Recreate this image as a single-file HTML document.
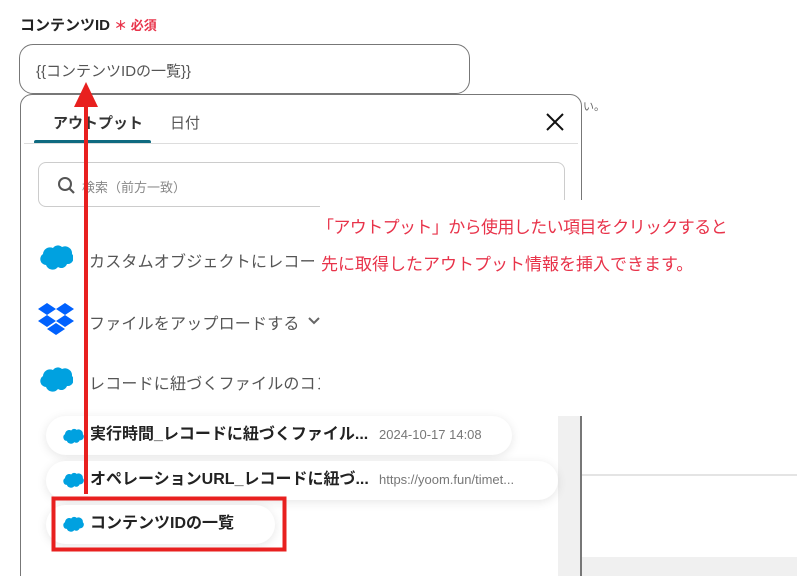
<!DOCTYPE html>
<html><head><meta charset="utf-8"><style>
*{margin:0;padding:0;box-sizing:border-box}
html,body{width:797px;height:576px;overflow:hidden}
body{position:relative;background:#fff;font-family:"Liberation Sans","Noto Sans CJK JP",sans-serif}
.a{position:absolute}
.pill{position:absolute;background:#fff;border-radius:20px;box-shadow:0 2px 10px rgba(0,0,0,0.10);font-weight:bold;font-size:16px;color:#222;line-height:38px;padding-left:44px;white-space:nowrap}
.pill .s{font-weight:normal;font-size:13px;color:#777;position:absolute;left:333px;top:0}
.sf{position:absolute}
.it{position:absolute;left:89px;font-size:16px;color:#555;white-space:nowrap;letter-spacing:0.2px}
</style></head><body>
<div class="a" style="left:20px;top:14px;font-size:15px;font-weight:bold;color:#222">コンテンツID <span style="color:#e8334a;font-size:13px">＊ 必須</span></div>
<div class="a" style="left:19px;top:44px;width:451px;height:50px;border:1px solid #777;border-radius:14px;padding:15px 0 0 16px;font-size:15px;color:#555">{{コンテンツIDの一覧}}</div>
<div class="a" style="left:583px;top:98px;font-size:11px;color:#666">い。</div>
<div class="a" style="left:20px;top:94px;width:562px;height:500px;border:1.5px solid #777;border-radius:12px;background:#fff"></div>
<div class="a" style="left:53px;top:112px;font-size:15px;font-weight:bold;color:#333">アウトプット</div>
<div class="a" style="left:170px;top:112px;font-size:15px;color:#555">日付</div>
<div class="a" style="left:34px;top:140px;width:117px;height:4px;background:#0e6a80;border-radius:2px"></div>
<div class="a" style="left:24px;top:143px;width:554px;height:1px;background:#ddd"></div>
<svg class="a" style="left:545px;top:112px" width="20" height="20"><path d="M2 2L18 18M18 2L2 18" stroke="#111" stroke-width="2"/></svg>
<div class="a" style="left:38px;top:162px;width:527px;height:45px;border:1px solid #ccc;border-radius:8px"></div>
<svg class="a" style="left:57px;top:176px" width="20" height="20"><circle cx="8" cy="8" r="6" stroke="#555" stroke-width="2" fill="none"/><path d="M12.5 12.5L17 17" stroke="#555" stroke-width="2.2"/></svg>
<div class="a" style="left:82px;top:177px;font-size:13px;color:#888">検索（前方一致）</div>
<svg class="sf" style="left:39px;top:244px" width="34" height="26" viewBox="0 0 34 26"><path d="M14 4a6 6 0 0 1 9-1a7 7 0 0 1 10 7a6 6 0 0 1-5 10a6 6 0 0 1-9 3a7 7 0 0 1-12-2a6 6 0 0 1-3-11a7 7 0 0 1 10-6z" fill="#00a1e0"/></svg>
<div class="it" style="top:248px">カスタムオブジェクトにレコード</div>
<svg class="sf" style="left:38px;top:303px" width="36" height="34" viewBox="0 0 36 34"><path d="M9 0l9 6-9 6-9-6zM27 0l9 6-9 6-9-6zM0 18l9-6 9 6-9 6zM36 18l-9-6-9 6 9 6zM9 26l9-6 9 6-9 6z" fill="#0061fe"/></svg>
<div class="it" style="top:310px">ファイルをアップロードする</div>
<svg class="a" style="left:307px;top:316px" width="14" height="10"><path d="M2 2L7 7L12 2" stroke="#666" stroke-width="2" fill="none"/></svg>
<svg class="sf" style="left:39px;top:366px" width="34" height="26" viewBox="0 0 34 26"><path d="M14 4a6 6 0 0 1 9-1a7 7 0 0 1 10 7a6 6 0 0 1-5 10a6 6 0 0 1-9 3a7 7 0 0 1-12-2a6 6 0 0 1-3-11a7 7 0 0 1 10-6z" fill="#00a1e0"/></svg>
<div class="it" style="top:370px">レコードに紐づくファイルのコン</div>
<div class="a" style="left:320px;top:200px;width:477px;height:216px;background:#fff"></div>
<div class="a" style="left:210px;top:400px;width:110px;height:16px;background:#fff"></div>
<div class="a" style="left:317px;top:209px;font-size:17px;color:#e8334a;line-height:37px;white-space:nowrap;letter-spacing:-0.6px">「アウトプット」から使用したい項目をクリックすると</div>
<div class="a" style="left:321px;top:246px;font-size:17px;color:#e8334a;line-height:37px;white-space:nowrap;letter-spacing:0px">先に取得したアウトプット情報を挿入できます。</div>
<div class="a" style="left:558px;top:416px;width:22px;height:160px;background:#f0f0f0"></div>
<div class="a" style="left:580px;top:416px;width:2px;height:160px;background:#777"></div>
<div class="a" style="left:582px;top:474px;width:215px;height:2px;background:#e4e4e4"></div>
<div class="a" style="left:582px;top:557px;width:215px;height:19px;background:#f0f0f0"></div>
<div class="pill" style="left:46px;top:416px;width:466px;height:39px">実行時間_レコードに紐づくファイル...<span class="s">2024-10-17 14:08</span></div>
<div class="pill" style="left:46px;top:461px;width:512px;height:39px">オペレーションURL_レコードに紐づ...<span class="s">https://yoom.fun/timet...</span></div>
<div class="pill" style="left:46px;top:505px;width:229px;height:39px">コンテンツIDの一覧</div>
<svg class="a" style="left:62px;top:428px" width="22" height="16" viewBox="0 0 34 26"><path d="M14 4a6 6 0 0 1 9-1a7 7 0 0 1 10 7a6 6 0 0 1-5 10a6 6 0 0 1-9 3a7 7 0 0 1-12-2a6 6 0 0 1-3-11a7 7 0 0 1 10-6z" fill="#00a1e0"/></svg>
<svg class="a" style="left:62px;top:472px" width="22" height="16" viewBox="0 0 34 26"><path d="M14 4a6 6 0 0 1 9-1a7 7 0 0 1 10 7a6 6 0 0 1-5 10a6 6 0 0 1-9 3a7 7 0 0 1-12-2a6 6 0 0 1-3-11a7 7 0 0 1 10-6z" fill="#00a1e0"/></svg>
<svg class="a" style="left:62px;top:516px" width="22" height="16" viewBox="0 0 34 26"><path d="M14 4a6 6 0 0 1 9-1a7 7 0 0 1 10 7a6 6 0 0 1-5 10a6 6 0 0 1-9 3a7 7 0 0 1-12-2a6 6 0 0 1-3-11a7 7 0 0 1 10-6z" fill="#00a1e0"/></svg>
<svg class="a" style="left:0;top:0" width="797" height="576">
<rect x="53.5" y="498.5" width="231" height="51" fill="none" stroke="#e8201f" stroke-width="4"/>
<line x1="86" y1="494" x2="86" y2="104" stroke="#e8201f" stroke-width="4"/>
<path d="M74 107L86 82L98 107z" fill="#e8201f"/>
</svg>
</body></html>
